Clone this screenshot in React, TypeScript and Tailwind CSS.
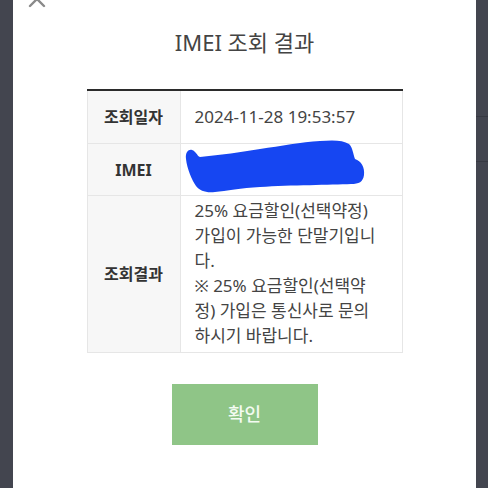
export default function App() {
    return (
        <div
            className="flex h-[488px] w-[488px] overflow-hidden bg-[#43454f]"
            style={{ fontFamily: '"Noto Sans", "Noto Sans CJK KR", sans-serif' }}
        >
            {/* left strip */}
            <div className="w-[13px] flex-none" />

            {/* modal */}
            <div className="relative flex w-[463px] flex-none flex-col items-center bg-white">
                {/* close icon, cut off at the top */}
                <svg className="absolute left-[14px] top-[-11px]" width="20" height="20" viewBox="0 0 20 20">
                    <path d="M3 3 L17 17 M17 3 L3 17" stroke="#8a8a8a" strokeWidth="2.4" strokeLinecap="round" />
                </svg>

                <h1 className="mt-[26px] text-[22px] leading-[32px] font-normal text-[#444]">IMEI 조회 결과</h1>

                {/* result table */}
                <div className="mt-[31px] w-[316px] border-t-2 border-[#2b2b2b] text-[16px] text-[#333]">
                    <div className="flex h-[53px] border-b border-[#e6e6e6]">
                        <div className="flex w-[94px] flex-none items-center justify-center border-l border-r border-[#e6e6e6] bg-[#f7f7f7] font-bold">조회일자</div>
                        <div className="flex flex-1 items-center border-r border-[#e6e6e6] pl-[14px] text-[17px] text-[#444]">2024-11-28 19:53:57</div>
                    </div>
                    <div className="flex h-[52px] border-b border-[#e6e6e6]">
                        <div className="flex w-[94px] flex-none items-center justify-center border-l border-r border-[#e6e6e6] bg-[#f7f7f7] font-bold">IMEI</div>
                        <div className="relative flex-1 border-r border-[#e6e6e6]">
                            <svg className="absolute left-0 top-[-5px]" width="188" height="56" viewBox="0 0 188 56">
                                <path
                                    d="M5 20 C4 13 8 10 11 11 C15 12 16 17 19 18 C40 16 60 13 79 10 C100 7 120 3 139 2 C152 1 162 1 168 5 C172 9 172 15 174 20 C180 22 184 28 183 36 C182 43 178 45 170 45 C150 46 110 46 79 48 C60 49 45 52 34 53 C25 54 19 52 15 47 C11 41 6 30 5 20 Z"
                                    fill="#1646f2"
                                />
                            </svg>
                        </div>
                    </div>
                    <div className="flex border-b border-[#e6e6e6]">
                        <div className="flex w-[94px] flex-none items-center justify-center border-l border-r border-[#e6e6e6] bg-[#f7f7f7] font-bold">조회결과</div>
                        <div className="flex-1 whitespace-nowrap border-r border-[#e6e6e6] pt-[2px] pb-[4px] pl-[14px] pr-[4px] text-[17px] leading-[25px] text-[#444]">
                            <p>25% 요금할인(선택약정)</p>
                            <p>가입이 가능한 단말기입니</p>
                            <p>다.</p>
                            <p>※ 25% 요금할인(선택약</p>
                            <p>정) 가입은 통신사로 문의</p>
                            <p>하시기 바랍니다.</p>
                        </div>
                    </div>
                </div>

                <button className="mt-[31px] h-[61px] w-[146px] bg-[#8fc587] text-[18px] font-medium text-[#f4fbf2]">확인</button>
            </div>

            {/* right strip with faint dividers */}
            <div className="flex flex-1 flex-col">
                <div className="h-[117px] border-b border-[#373942]" />
                <div className="h-[45px] border-b border-[#373942]" />
            </div>
        </div>
    )
}
